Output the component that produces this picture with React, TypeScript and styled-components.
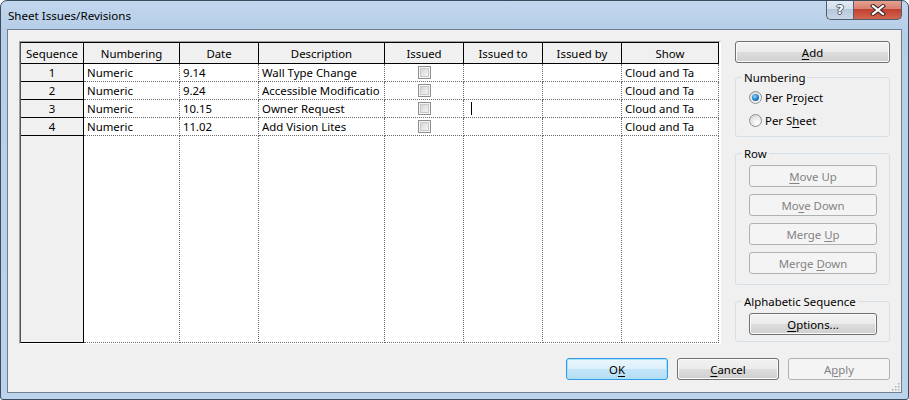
import React from 'react';
import styled, { createGlobalStyle, css } from 'styled-components';

const GlobalStyle = createGlobalStyle`
  html, body {
    margin: 0;
    padding: 0;
    background: #ffffff;
  }
  body {
    font-family: 'Segoe UI', 'Noto Sans', 'Liberation Sans', sans-serif;
    font-size: 11.4px;
    color: #000;
  }
  * { box-sizing: border-box; }
`;

type Variant = 'normal' | 'default' | 'disabled';

interface Row {
  seq: number;
  numbering: string;
  date: string;
  description: string;
  issuedTo?: string;
  issuedBy?: string;
  show: string;
  editing?: boolean;
}

const columns = [
  { key: 'seq', title: 'Sequence', width: 63 },
  { key: 'numbering', title: 'Numbering', width: 96 },
  { key: 'date', title: 'Date', width: 79 },
  { key: 'description', title: 'Description', width: 126 },
  { key: 'issued', title: 'Issued', width: 79 },
  { key: 'issuedTo', title: 'Issued to', width: 79 },
  { key: 'issuedBy', title: 'Issued by', width: 79 },
  { key: 'show', title: 'Show', width: 97 },
];

const rows: Row[] = [
  { seq: 1, numbering: 'Numeric', date: '9.14', description: 'Wall Type Change', show: 'Cloud and Ta' },
  { seq: 2, numbering: 'Numeric', date: '9.24', description: 'Accessible Modificatio', show: 'Cloud and Ta' },
  { seq: 3, numbering: 'Numeric', date: '10.15', description: 'Owner Request', show: 'Cloud and Ta', editing: true },
  { seq: 4, numbering: 'Numeric', date: '11.02', description: 'Add Vision Lites', show: 'Cloud and Ta' },
];

const Window = styled.div`
  width: 909px;
  height: 400px;
  border: 1px solid #3b4c5e;
  border-radius: 7px 7px 3px 3px;
  background: linear-gradient(180deg, #c2d7ee 0px, #b7cee8 28px, #bcd3ec 100%);
  padding: 0 6px 6px 6px;
  display: flex;
  flex-direction: column;
  position: relative;
  overflow: hidden;
`;

const TitleBar = styled.div`
  height: 28px;
  display: flex;
  align-items: flex-start;
  justify-content: space-between;
`;

const Title = styled.div`
  align-self: center;
  padding-left: 1px;
  font-size: 11.6px;
  color: #000;
  margin-top: 1px;
`;

const CaptionButtons = styled.div`
  display: flex;
  margin-top: -1px;
`;

const CaptionButton = styled.div<{ $close?: boolean }>`
  height: 20px;
  display: flex;
  align-items: center;
  justify-content: center;
  border: 1px solid #4f5e70;
  border-top: none;
  ${(p) =>
    p.$close
      ? css`
          width: 49px;
          border-radius: 0 0 5px 0;
          background: linear-gradient(180deg, #e8a592 0%, #d88273 45%, #c2402f 50%, #d3664f 100%);
        `
      : css`
          width: 27px;
          border-right: none;
          border-radius: 0 0 0 5px;
          background: linear-gradient(180deg, #e3ecf6 0%, #d3dfec 45%, #b7c7da 50%, #c7d6e7 100%);
          color: #fff;
          font-family: 'DejaVu Sans', sans-serif;
          font-weight: bold;
          font-size: 13px;
          text-shadow: -1px 0 #4a5868, 1px 0 #4a5868, 0 -1px #4a5868, 0 1px #4a5868;
        `}
`;

const Client = styled.div`
  flex: 1;
  border: 1px solid #707f8f;
  background: #f0f0f0;
  padding: 11px 11px 12px 11px;
  display: flex;
  flex-direction: column;
  position: relative;
`;

const Main = styled.div`
  display: flex;
  gap: 14px;
  height: 303px;
`;

const TableFrame = styled.div`
  width: 702px;
  height: 303px;
  border: 1px solid;
  border-color: #a0a0a0 #ffffff #ffffff #a0a0a0;
  background: #ffffff;
`;

const Grid = styled.div`
  display: grid;
  grid-template-columns: ${columns.map((c) => `${c.width}px`).join(' ')};
  grid-template-rows: 21px repeat(4, 18px) 1fr;
  height: 100%;
  width: 699px;
  border-top: 1px solid #000;
  border-left: 1px solid #555;
`;

const HeaderCell = styled.div`
  background: #f0f0f0;
  border-right: 1px solid #000;
  border-bottom: 1px solid #000;
  display: flex;
  align-items: center;
  justify-content: center;
  white-space: nowrap;
  overflow: hidden;
`;

const SeqCell = styled.div`
  background: #f0f0f0;
  border-right: 1px solid #000;
  border-bottom: 1px solid #000;
  display: flex;
  align-items: center;
  justify-content: center;
  line-height: 17px;
`;

const DataCell = styled.div<{ $center?: boolean }>`
  background: #ffffff;
  border-right: 1px dotted #6a6a6a;
  border-bottom: 1px dotted #6a6a6a;
  display: flex;
  align-items: center;
  justify-content: ${(p) => (p.$center ? 'center' : 'flex-start')};
  padding-left: ${(p) => (p.$center ? '0' : '3px')};
  white-space: nowrap;
  overflow: hidden;
  line-height: 17px;
`;

const CheckBox = styled.span`
  width: 13px;
  height: 13px;
  border: 1px solid #8e8f8f;
  display: inline-block;
  box-shadow: inset 0 0 0 1px #f4f4f4, inset 0 0 0 2px #c9c9c9;
  background-image: linear-gradient(135deg, #cbcbcb 0%, #e6e6e6 50%, #fbfbfb 100%);
  background-clip: content-box;
  padding: 2px;
  background-color: #f4f4f4;
`;

const Caret = styled.span`
  display: inline-block;
  width: 1px;
  height: 13px;
  background: #000;
  margin-left: 4px;
`;

const Side = styled.div`
  width: 155px;
  display: flex;
  flex-direction: column;
`;

const Button = styled.button<{ $variant?: Variant; $width?: number }>`
  width: ${(p) => (p.$width ? `${p.$width}px` : '100%')};
  height: 22px;
  padding: 0;
  font-family: inherit;
  font-size: 11.4px;
  border-radius: 3px;
  display: flex;
  align-items: center;
  justify-content: center;
  white-space: pre;
  ${(p) => {
    switch (p.$variant) {
      case 'disabled':
        return css`
          border: 1px solid #adb2b5;
          background: #f4f4f4;
          color: #838383;
        `;
      case 'default':
        return css`
          border: 1px solid #3399e6;
          color: #000;
          box-shadow: inset 0 0 0 1px #a9e2fc;
          background: linear-gradient(180deg, #ebf6fd 0%, #dcf0fb 50%, #c4e5f8 50%, #b4dcf3 100%);
        `;
      default:
        return css`
          border: 1px solid #707070;
          color: #000;
          box-shadow: inset 0 0 0 1px #fbfbfb;
          background: linear-gradient(180deg, #f2f2f2 0%, #ebebeb 50%, #dddddd 50%, #cfcfcf 100%);
        `;
    }
  }}
`;

const Key = styled.span`
  text-decoration: underline;
  text-underline-offset: 2px;
`;

const Group = styled.fieldset<{ $gap?: number; $pb?: number; $top: number }>`
  margin: ${(p) => p.$top}px 0 0 0;
  border: 1px solid #d5dfe5;
  border-radius: 3px;
  padding: 1px 12px ${(p) => p.$pb ?? 4}px 13px;
  display: flex;
  flex-direction: column;
  gap: ${(p) => p.$gap ?? 0}px;
  min-width: 0;
`;

const Legend = styled.legend`
  padding: 0 2px;
  margin-left: -7px;
  line-height: 15px;
  font-size: 11.4px;
`;

const RadioRow = styled.label`
  height: 23px;
  display: flex;
  align-items: center;
  gap: 3px;
`;

const RadioDot = styled.span<{ $checked?: boolean }>`
  width: 13px;
  height: 13px;
  border-radius: 50%;
  border: 1px solid #8e8f8f;
  display: inline-flex;
  align-items: center;
  justify-content: center;
  background: radial-gradient(circle at 65% 70%, #ffffff 0%, #e6e6e6 55%, #c9c9c9 100%);
  &::after {
    content: '';
    display: ${(p) => (p.$checked ? 'block' : 'none')};
    width: 7px;
    height: 7px;
    border-radius: 50%;
    background: radial-gradient(circle at 40% 35%, #8fd6ff 0%, #1c7bc6 55%, #0b4f8f 100%);
  }
`;

const Footer = styled.div`
  margin-top: 14px;
  display: flex;
  justify-content: flex-end;
  gap: 9px;
`;

const SizeGrip = styled.svg`
  position: absolute;
  right: 1px;
  bottom: 1px;
`;

const renderCell = (row: Row, key: string) => {
  switch (key) {
    case 'issued':
      return (
        <DataCell key={key} $center>
          <CheckBox />
        </DataCell>
      );
    case 'issuedTo':
      return <DataCell key={key}>{row.editing ? <Caret /> : row.issuedTo}</DataCell>;
    default:
      return <DataCell key={key}>{(row as any)[key]}</DataCell>;
  }
};

export default function App() {
  return (
    <>
      <GlobalStyle />
      <Window>
        <TitleBar>
          <Title>Sheet Issues/Revisions</Title>
          <CaptionButtons>
            <CaptionButton>?</CaptionButton>
            <CaptionButton $close>
              <svg width="16" height="12" viewBox="0 0 16 12">
                <path d="M3 2 L13 10 M13 2 L3 10" stroke="#3d2a2a" strokeWidth="4.2" strokeLinecap="square" />
                <path d="M3 2 L13 10 M13 2 L3 10" stroke="#ffffff" strokeWidth="2.2" strokeLinecap="square" />
              </svg>
            </CaptionButton>
          </CaptionButtons>
        </TitleBar>
        <Client>
          <Main>
            <TableFrame>
              <Grid>
                {columns.map((c) => (
                  <HeaderCell key={c.key}>{c.title}</HeaderCell>
                ))}
                {rows.map((row) => (
                  <React.Fragment key={row.seq}>
                    <SeqCell>{row.seq}</SeqCell>
                    {columns.slice(1).map((c) => renderCell(row, c.key))}
                  </React.Fragment>
                ))}
                <SeqCell />
                {columns.slice(1).map((c) => (
                  <DataCell key={c.key} />
                ))}
              </Grid>
            </TableFrame>
            <Side>
              <Button>
                <span>
                  <Key>A</Key>dd
                </span>
              </Button>
              <Group $top={7}>
                <Legend>Numbering</Legend>
                <RadioRow>
                  <RadioDot $checked />
                  <span>
                    Per P<Key>r</Key>oject
                  </span>
                </RadioRow>
                <RadioRow>
                  <RadioDot />
                  <span>
                    Per S<Key>h</Key>eet
                  </span>
                </RadioRow>
              </Group>
              <Group $top={9} $gap={7} $pb={10}>
                <Legend>Row</Legend>
                <Button $variant="disabled" style={{ marginTop: 3 }}>
                  <span>
                    <Key>M</Key>ove Up
                  </span>
                </Button>
                <Button $variant="disabled">
                  <span>
                    Mo<Key>v</Key>e Down
                  </span>
                </Button>
                <Button $variant="disabled">
                  <span>
                    {'Merge '}
                    <Key>U</Key>p
                  </span>
                </Button>
                <Button $variant="disabled">
                  <span>
                    {'Merge '}
                    <Key>D</Key>own
                  </span>
                </Button>
              </Group>
              <Group $top={9} $pb={6}>
                <Legend>Alphabetic Sequence</Legend>
                <Button style={{ marginTop: 3 }}>
                  <span>
                    <Key>O</Key>ptions...
                  </span>
                </Button>
              </Group>
            </Side>
          </Main>
          <Footer>
            <Button $variant="default" $width={102}>
              <span>
                O<Key>K</Key>
              </span>
            </Button>
            <Button $width={102}>
              <span>
                <Key>C</Key>ancel
              </span>
            </Button>
            <Button $variant="disabled" $width={102}>
              <span>
                A<Key>p</Key>ply
              </span>
            </Button>
          </Footer>
          <SizeGrip width="10" height="10" viewBox="0 0 10 10">
            {[
              [8, 2],
              [8, 5],
              [5, 5],
              [8, 8],
              [5, 8],
              [2, 8],
            ].map(([x, y]) => (
              <rect key={`${x}-${y}`} x={x} y={y} width="1.5" height="1.5" fill="#a7aeb6" />
            ))}
          </SizeGrip>
        </Client>
      </Window>
    </>
  );
}
